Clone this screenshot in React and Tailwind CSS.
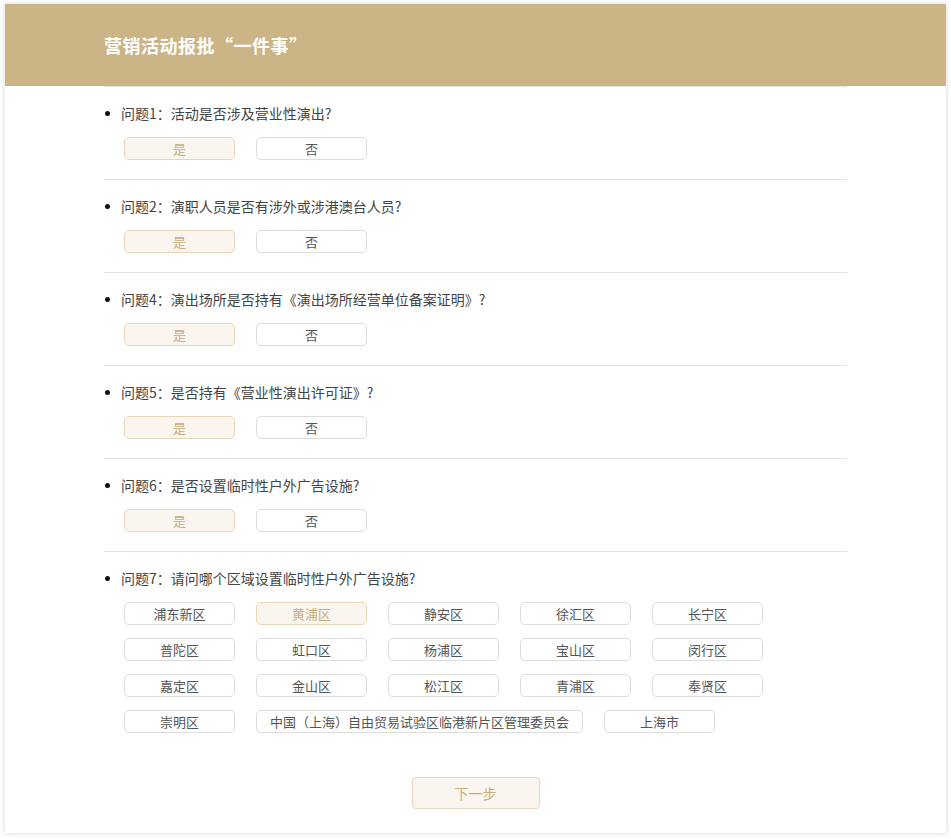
const questions = [
  '问题1：活动是否涉及营业性演出?',
  '问题2：演职人员是否有涉外或涉港澳台人员?',
  '问题4：演出场所是否持有《演出场所经营单位备案证明》?',
  '问题5：是否持有《营业性演出许可证》?',
  '问题6：是否设置临时性户外广告设施?',
]

const districts = [
  ['浦东新区', '黄浦区', '静安区', '徐汇区', '长宁区'],
  ['普陀区', '虹口区', '杨浦区', '宝山区', '闵行区'],
  ['嘉定区', '金山区', '松江区', '青浦区', '奉贤区'],
]

function Choice({ label, active, wide }) {
  return (
    <button
      className={
        'h-[23px] rounded-[5px] border text-[13px] leading-[21px] text-center ' +
        (wide ? 'w-[327px] ' : 'w-[111px] ') +
        (active
          ? 'bg-[#faf6ef] border-[#e7d7b8] text-[#c8ad7a]'
          : 'bg-white border-[#dcdcdc] text-[#555]')
      }
    >
      {label}
    </button>
  )
}

function Question({ text }) {
  return (
    <div className="flex items-center h-[20px] text-[14px] text-[#444]">
      <span className="w-[5px] h-[5px] rounded-full bg-[#111] ml-[1px] mr-[11px]" />
      {text}
    </div>
  )
}

export default function App() {
  return (
    <div
      className="w-[951px] h-[839px] bg-white pt-[4px] pl-[5px]"
      style={{ fontFamily: '"Noto Sans CJK SC", "Noto Sans", sans-serif' }}
    >
      <div className="w-[941px] h-[829px] bg-white shadow-[0_0_5px_rgba(0,0,0,0.18)] flex flex-col">
        <div className="h-[82px] bg-[#cbb486] flex items-center pl-[99px]">
          <h1 className="text-[18px] font-bold text-white tracking-[0.5px]">营销活动报批“一件事”</h1>
        </div>

        <div className="mx-[99px] w-[743px]">
          {questions.map((q) => (
            <div key={q} className="border-t border-[#e3e3e3] pt-[16px] pb-[19px]">
              <Question text={q} />
              <div className="flex gap-[21px] mt-[14px] pl-[20px]">
                <Choice label="是" active />
                <Choice label="否" />
              </div>
            </div>
          ))}

          <div className="border-t border-[#e3e3e3] pt-[16px]">
            <Question text="问题7：请问哪个区域设置临时性户外广告设施?" />
            <div className="flex flex-col gap-[13px] mt-[14px] pl-[20px]">
              {districts.map((row, i) => (
                <div key={i} className="flex gap-[21px]">
                  {row.map((d) => (
                    <Choice key={d} label={d} active={d === '黄浦区'} />
                  ))}
                </div>
              ))}
              <div className="flex gap-[21px]">
                <Choice label="崇明区" />
                <Choice label="中国（上海）自由贸易试验区临港新片区管理委员会" wide />
                <Choice label="上海市" />
              </div>
            </div>
          </div>

          <div className="flex justify-center mt-[44px]">
            <button className="w-[128px] h-[32px] rounded-[4px] border border-[#e7d7b8] bg-[#faf6ef] text-[14px] text-[#c8ad7a]">
              下一步
            </button>
          </div>
        </div>
      </div>
    </div>
  )
}
